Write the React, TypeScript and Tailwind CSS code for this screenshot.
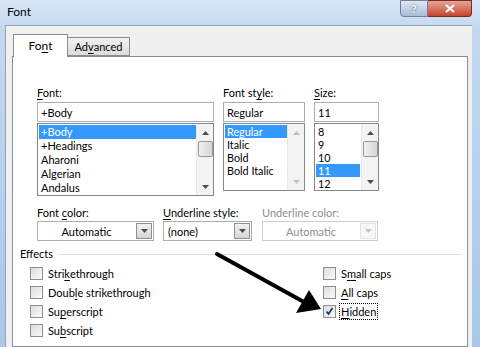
import React from 'react';

const fontItems = ['+Body', '+Headings', 'Aharoni', 'Algerian', 'Andalus'];
const styleItems = ['Regular', 'Italic', 'Bold', 'Bold Italic'];
const sizeItems = ['8', '9', '10', '11', '12'];

function U({ children }: { children: React.ReactNode }) {
  return <span className="underline underline-offset-2">{children}</span>;
}

function UpArrow({ disabled }: { disabled?: boolean }) {
  return (
    <svg width="7" height="4" viewBox="0 0 7 4">
      <path d="M0 4 L3.5 0 L7 4 Z" fill={disabled ? '#bfbfbf' : '#4d4d4d'} />
    </svg>
  );
}

function DownArrow({ disabled }: { disabled?: boolean }) {
  return (
    <svg width="7" height="4" viewBox="0 0 7 4">
      <path d="M0 0 L7 0 L3.5 4 Z" fill={disabled ? '#bfbfbf' : '#4d4d4d'} />
    </svg>
  );
}

function ScrollBar({ thumb, disabled }: { thumb?: boolean; disabled?: boolean }) {
  return (
    <div className="flex w-[17px] flex-col items-center bg-[#f3f3f3] border-l border-[#e8e8e8]">
      <div className="flex h-[17px] w-full items-center justify-center">
        <UpArrow disabled={disabled} />
      </div>
      {thumb && (
        <div className="h-[16px] w-[15px] rounded-[2px] border border-[#979797] bg-gradient-to-r from-[#f0f0f0] to-[#d6d6d6]" />
      )}
      <div className="flex-1" />
      <div className="flex h-[17px] w-full items-center justify-center">
        <DownArrow disabled={disabled} />
      </div>
    </div>
  );
}

function ListBox({
  items,
  selected,
  rowH,
  height,
  selW,
  thumb,
  disabled,
}: {
  items: string[];
  selected: number;
  rowH: string;
  height: string;
  selW: string;
  thumb?: boolean;
  disabled?: boolean;
}) {
  return (
    <div className={`mt-[1px] flex border border-[#828790] bg-white ${height}`}>
      <div className="flex-1 overflow-hidden pt-[1px] pl-[1px]">
        {items.map((it, i) => (
          <div
            key={it}
            className={`${rowH} ${selW} flex items-center overflow-hidden pl-[2px] leading-[12px] ${
              i === selected ? 'bg-[#3399ff] text-white' : 'text-black'
            }`}
          >
            {it}
          </div>
        ))}
      </div>
      <ScrollBar thumb={thumb} disabled={disabled} />
    </div>
  );
}

function TextBox({ value }: { value: string }) {
  return (
    <div className="flex h-[20px] items-center border border-[#abadb3] bg-white pl-[3px] leading-none">
      {value}
    </div>
  );
}

function Combo({ value, width, disabled }: { value: string; width: string; disabled?: boolean }) {
  return (
    <div
      className={`flex h-[20px] items-stretch border bg-white ${width} ${
        disabled ? 'border-[#cfcfcf] text-[#8d8d8d]' : 'border-[#abadb3] text-black'
      }`}
    >
      <div className={`flex flex-1 items-center leading-none ${value === '(none)' ? 'pl-[4px]' : 'justify-center'}`}>
        {value}
      </div>
      <div
        className={`m-[1px] flex w-[16px] items-center justify-center border ${
          disabled ? 'border-[#e3e3e3] bg-[#f7f7f7]' : 'border-[#8f8f8f] bg-gradient-to-b from-[#f2f2f2] to-[#d4d4d4]'
        }`}
      >
        <DownArrow disabled={disabled} />
      </div>
    </div>
  );
}

function Check({ label, checked, focus }: { label: React.ReactNode; checked?: boolean; focus?: boolean }) {
  return (
    <div className="flex h-[19px] items-center">
      <div className="flex h-[13px] w-[13px] items-center justify-center border border-[#8e8f8f] bg-gradient-to-br from-[#dcdcdc] to-[#fbfbfb]">
        {checked && (
          <svg width="9" height="9" viewBox="0 0 9 9">
            <path d="M1.5 4.5 L3.5 7 L7.5 1" stroke="#21357c" strokeWidth="1.8" fill="none" />
          </svg>
        )}
      </div>
      <div
        className={`ml-[3px] flex h-[17px] items-center px-[1px] leading-none ${
          focus ? 'border border-dotted border-black' : 'border border-transparent'
        }`}
      >
        {label}
      </div>
    </div>
  );
}

export default function App() {
  return (
    <div
      className="relative flex h-[347px] w-[480px] flex-col overflow-hidden bg-gradient-to-b from-[#c6daf1] to-[#aac7e8] text-[11px] leading-[13px] text-black"
      style={{ fontFamily: 'Lato, "Noto Sans", sans-serif' }}
    >
      {/* title bar */}
      <div className="flex h-[25px] shrink-0 items-start bg-gradient-to-b from-[#d9e7f6] to-[#c6daf1]">
        <div className="pl-[7px] pt-[3px] text-[12px] leading-[18px]">Font</div>
        <div className="flex-1" />
        <div className="mr-[8px] flex h-[17px]">
          <div className="flex w-[28px] items-center justify-center rounded-bl-[4px] border border-[#6d7f99] bg-gradient-to-b from-[#dfe8f3] to-[#a8bcd6] text-[12px] font-bold leading-none text-white [text-shadow:0_0_2px_#3b4c66]">
            ?
          </div>
          <div className="flex w-[44px] items-center justify-center rounded-br-[4px] border border-l-0 border-[#7b2a1e] bg-gradient-to-b from-[#e5a497] to-[#c5412c]">
            <svg width="10" height="9" viewBox="0 0 10 9">
              <path d="M1 1 L9 8 M9 1 L1 8" stroke="white" strokeWidth="2.2" />
            </svg>
          </div>
        </div>
      </div>

      {/* dialog body */}
      <div className="ml-[5px] mr-[8px] flex flex-1 flex-col border-l border-t border-[#8fa3bb] bg-[#f0f0f0] pl-[6px] pr-[4px] pt-[8px]">
        {/* tabs */}
        <div className="relative z-10 flex h-[23px] items-end pl-[1px] text-[12px]">
          <div className="flex h-[23px] w-[55px] items-center justify-center border border-b-0 border-[#898c95] bg-white pb-[1px]">
            Fo<U>n</U>t
          </div>
          <div className="mb-[1px] flex h-[19px] w-[62px] items-center justify-center border border-l-0 border-[#898c95] bg-gradient-to-b from-[#f2f2f2] to-[#dcdcdc] text-[11px]">
            Ad<U>v</U>anced
          </div>
        </div>

        {/* panel */}
        <div className="-mt-[1px] flex-1 border border-[#898c95] bg-white pl-[24px] pt-[28px]">
          <div className="flex gap-[9px]">
            <div className="w-[177px]">
              <div className="h-[17px] leading-[16px]">
                <U>F</U>ont:
              </div>
              <TextBox value="+Body" />
              <ListBox items={fontItems} selected={0} rowH="h-[14px]" height="h-[73px]" selW="w-[158px]" thumb />
            </div>
            <div className="w-[82px]">
              <div className="h-[17px] leading-[16px]">
                Font st<U>y</U>le:
              </div>
              <TextBox value="Regular" />
              <div className="text-[10.8px]">
                <ListBox items={styleItems} selected={0} rowH="h-[13px]" height="h-[68px]" selW="w-[62px]" disabled />
              </div>
            </div>
            <div className="w-[65px]">
              <div className="h-[17px] leading-[16px]">
                <U>S</U>ize:
              </div>
              <TextBox value="11" />
              <div className="text-[10.8px]">
                <ListBox items={sizeItems} selected={3} rowH="h-[13px]" height="h-[68px]" selW="w-[44px]" thumb />
              </div>
            </div>
          </div>

          <div className="mt-[9px] flex">
            <div className="w-[117px]">
              <div className="h-[16px] leading-[16px]">
                Font <U>c</U>olor:
              </div>
              <Combo value="Automatic" width="w-[117px]" />
            </div>
            <div className="ml-[9px] w-[89px]">
              <div className="h-[16px] leading-[16px]">
                <U>U</U>nderline style:
              </div>
              <Combo value="(none)" width="w-[89px]" />
            </div>
            <div className="ml-[10px] w-[116px]">
              <div className="h-[16px] leading-[16px] text-[#8d8d8d]">Underline color:</div>
              <Combo value="Automatic" width="w-[116px]" disabled />
            </div>
          </div>

          {/* effects */}
          <div className="-ml-[17px] mt-[5px] flex items-center">
            <div className="leading-[16px]">Effects</div>
            <div className="ml-[6px] mr-[6px] h-px flex-1 bg-[#d5dfe5]" />
          </div>
          <div className="-ml-[7px] mt-[2px] flex">
            <div className="w-[293px]">
              <Check label={<>Stri<U>k</U>ethrough</>} />
              <Check label={<>Doub<U>l</U>e strikethrough</>} />
              <Check label={<>Su<U>p</U>erscript</>} />
              <Check label={<>Su<U>b</U>script</>} />
            </div>
            <div>
              <Check label={<>S<U>m</U>all caps</>} />
              <Check label={<><U>A</U>ll caps</>} />
              <Check label={<><U>H</U>idden</>} checked focus />
            </div>
          </div>
        </div>
      </div>

      {/* annotation arrow over the dialog */}
      <svg className="pointer-events-none absolute left-0 top-0" width="480" height="347" viewBox="0 0 480 347">
        <line x1="217" y1="254" x2="304" y2="302" stroke="#000" strokeWidth="4" strokeLinecap="round" />
        <polygon points="321,309 296,313 309,290" fill="#000" />
      </svg>
    </div>
  );
}
